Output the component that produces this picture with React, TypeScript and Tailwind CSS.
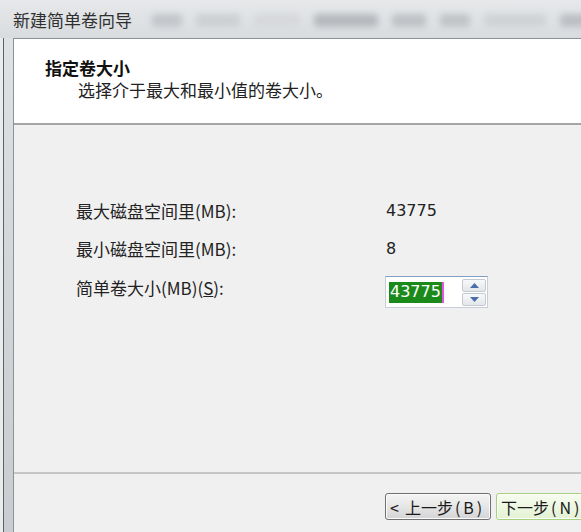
import React from 'react'

const cjk = '"Noto Sans CJK SC", "Noto Sans", sans-serif'

function GlassBlobs() {
  // blurred shapes of the desktop behind the aero title bar
  const blobs = [
    'w-[30px] bg-[#c3c6ca]',
    'w-[44px] bg-[#cdd0d3]',
    'w-[46px] bg-[#d6d8db]',
    'w-[64px] bg-[#b6b9bd]',
    'w-[34px] bg-[#bfc2c5]',
    'w-[30px] bg-[#c1c4c7]',
    'w-[62px] bg-[#d0d3d5]',
    'w-[40px] bg-[#bcbfc3]',
  ]
  return (
    <div className="flex items-center gap-[14px] ml-[20px] mt-[2px] blur-[3px]">
      {blobs.map((c, i) => (
        <div key={i} className={`h-[13px] rounded-sm ${c}`} />
      ))}
    </div>
  )
}

function WinButton({ children, primary }: { children: React.ReactNode; primary?: boolean }) {
  return (
    <button
      className={
        primary
          ? 'h-[27px] w-[106px] shrink-0 flex items-center pl-[4px] rounded-[3px] border border-[#a6d27c] bg-gradient-to-b from-[#f7fcf0] to-[#e4f2d4] text-[16px] text-[#1a1a1a] shadow-[inset_0_0_0_1px_#ffffff] whitespace-nowrap'
          : 'h-[27px] w-[106px] shrink-0 flex items-center pl-[4px] rounded-[3px] border border-[#707070] bg-gradient-to-b from-[#f4f4f4] via-[#e6e6e6] to-[#d4d4d4] text-[16px] text-[#1a1a1a] shadow-[inset_0_0_0_1px_#fbfbfb] whitespace-nowrap'
      }
      style={{ fontFamily: cjk }}
    >
      {children}
    </button>
  )
}

export default function App() {
  return (
    <div className="w-[581px] h-[532px] overflow-hidden flex flex-col bg-[#dfe2e6]" style={{ fontFamily: cjk }}>
      {/* Title bar */}
      <div className="h-[38px] shrink-0 flex items-center bg-gradient-to-b from-[#e6e8ea] to-[#d9dcdf]">
        <span className="ml-[13px] text-[17px] text-[#2f2f2f] leading-none whitespace-nowrap">新建简单卷向导</span>
        <GlassBlobs />
      </div>

      <div className="flex-1 flex min-h-0">
        {/* Left window frame */}
        <div className="w-[13px] shrink-0 border-l-[3px] border-l-[#e9ebed] bg-gradient-to-b from-[#dfe2e5] via-[#d2d5d8] to-[#c9ccd0]">
          <div className="h-full w-[1px] bg-[#5e6266]" />
        </div>

        {/* Client area */}
        <div className="flex-1 flex flex-col border-l border-t border-[#8e9296] bg-[#f0f0f0] min-w-0">
          {/* Header */}
          <div className="h-[86px] shrink-0 bg-white border-b-2 border-[#a5a5a5] pt-[18px] pl-[31px]">
            <div className="text-[17px] leading-[22px] font-bold text-[#111] whitespace-nowrap">指定卷大小</div>
            <div className="text-[17px] leading-[22px] text-[#222] pl-[33px] whitespace-nowrap">
              选择介于最大和最小值的卷大小。
            </div>
          </div>

          {/* Body */}
          <div className="flex-1 flex flex-col pt-[67px] pl-[62px] text-[17px] text-[#222]">
            <div className="h-[38px] flex items-center">
              <span className="w-[310px] whitespace-nowrap">最大磁盘空间里(MB):</span>
              <span className="text-[16px]" style={{ fontFamily: '"DejaVu Sans", sans-serif' }}>43775</span>
            </div>
            <div className="h-[38px] flex items-center">
              <span className="w-[310px] whitespace-nowrap">最小磁盘空间里(MB):</span>
              <span className="text-[16px]" style={{ fontFamily: '"DejaVu Sans", sans-serif' }}>8</span>
            </div>
            <div className="h-[32px] mt-[8px] flex items-center">
              <span className="w-[309px] pb-[8px] whitespace-nowrap">
                简单卷大小(MB)(<span className="underline">S</span>):
              </span>
              <div className="h-[32px] w-[103px] flex items-center border border-[#c9ced6] border-t-[#7f9fc4] bg-white">
                <div className="flex-1 pl-[3px] flex items-center">
                  <span
                    className="h-[21px] px-[1px] flex items-center bg-[#1b8a1b] text-white text-[16px] leading-none border-r-2 border-[#e356e3]"
                    style={{ fontFamily: '"DejaVu Sans", sans-serif' }}
                  >
                    43775
                  </span>
                </div>
                <div className="w-[24px] mr-[1px] flex flex-col gap-[1px]">
                  <div className="h-[13px] flex items-center justify-center rounded-[2px] border border-[#c5cad1] bg-gradient-to-b from-[#f8f9fa] to-[#e3e6ea]">
                    <svg width="9" height="5" viewBox="0 0 9 5"><path d="M0 5 L4.5 0 L9 5 Z" fill="#4a6ea9" /></svg>
                  </div>
                  <div className="h-[13px] flex items-center justify-center rounded-[2px] border border-[#c5cad1] bg-gradient-to-b from-[#f8f9fa] to-[#e3e6ea]">
                    <svg width="9" height="5" viewBox="0 0 9 5"><path d="M0 0 L9 0 L4.5 5 Z" fill="#4a6ea9" /></svg>
                  </div>
                </div>
              </div>
            </div>
          </div>

          {/* Footer */}
          <div className="h-[60px] shrink-0 border-t-2 border-[#c6c6c6] flex items-start gap-[5px] pt-[19px] pl-[371px]">
            <WinButton>
              <span className="mr-[6px]">&lt;</span>上一步<span className="tracking-[3px] ml-[2px]">(B)</span>
            </WinButton>
            <WinButton primary>
              下一步<span className="tracking-[3px] ml-[2px]">(N)</span>
            </WinButton>
          </div>
        </div>
      </div>
    </div>
  )
}
